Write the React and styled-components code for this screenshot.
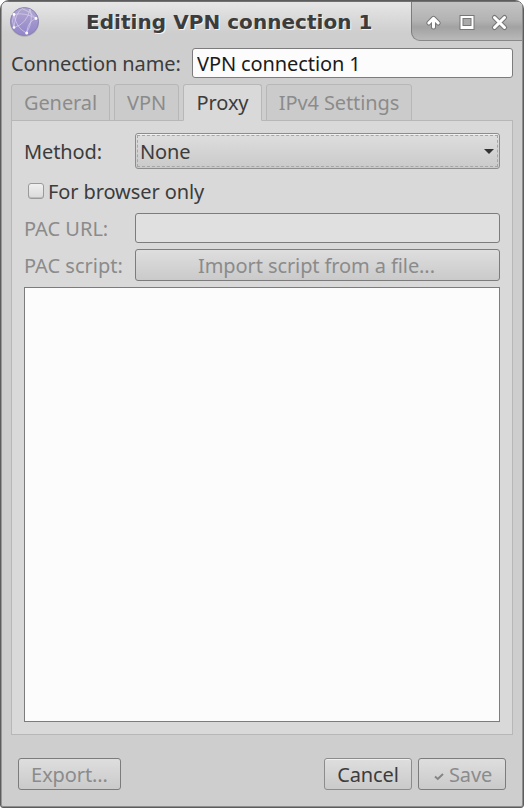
import React from "react";
import styled, { createGlobalStyle, css } from "styled-components";

const GlobalStyle = createGlobalStyle`
  *, *::before, *::after { box-sizing: border-box; }
  body { margin: 0; background: #fff; overflow: hidden; }
`;

const Window = styled.main`
  width: 524px;
  height: 808px;
  display: flex;
  flex-direction: column;
  background: #cecece;
  border: 1px solid #5c5c5c;
  border-radius: 9px 9px 3px 3px;
  box-shadow: inset 1px 0 #979797, inset -1px 0 #8e8e8e, inset 0 -1px #8e8e8e, inset 0 1px #f0f0f0;
  overflow: hidden;
  font-family: "Noto Sans", sans-serif;
  font-size: 20px;
  line-height: 28px;
  letter-spacing: -0.1px;
  color: #3c3c3c;
`;

const TitleBar = styled.header`
  height: 40px;
  flex: none;
  display: flex;
  align-items: flex-start;
  margin: 0 1px;
  border-top: 1px solid #707070;
  background: linear-gradient(#e6e6e6, #cecece 31px);
`;

const AppIcon = styled.svg`
  width: 32px;
  height: 32px;
  margin: 3px 0 0 6px;
  flex: none;
`;

const Title = styled.h1`
  flex: 1;
  margin: 0;
  padding-left: 46px;
  font: bold 20px/40px "DejaVu Sans", sans-serif;
  letter-spacing: 0.05px;
  white-space: nowrap;
  text-shadow: 1px 1px #f4f4f4;
`;

const WindowControls = styled.div`
  width: 111px;
  height: 39px;
  display: flex;
  align-items: center;
  justify-content: space-between;
  padding: 2px 12px 0 11px;
  background: linear-gradient(#c3c3c3, #b3b3b3 48%, #a2a2a2 66%, #b9b9b9);
  border-left: 1px solid #7c7c7c;
  border-bottom: 1px solid #888;
  border-bottom-left-radius: 9px;
  flex: none;
`;

const ControlIcon = styled.svg`
  width: 20px;
  height: 20px;
`;

const NameRow = styled.label`
  display: flex;
  margin: 7px 10px 0;
  line-height: 32px;
  height: 30px;
`;

const NameLabel = styled.span`
  width: 181px;
  flex: none;
`;

const Entry = styled.input`
  flex: 1;
  min-width: 0;
  height: 30px;
  padding: 0 4px;
  border: 1px solid #7c7c7c;
  border-radius: 3px;
  outline: none;
  background: #fcfcfc;
  font: inherit;
  line-height: 28px;
  letter-spacing: inherit;
  color: #1a1a1a;
  &:disabled { background: #e0e0e0; }
`;

const Tabs = styled.nav`
  display: flex;
  gap: 4px;
  height: 37px;
  margin: 6px 10px -1px;
  flex: none;
  z-index: 1;
`;

const Tab = styled.button`
  width: ${(p) => p.$width}px;
  height: 37px;
  padding: 0;
  border: 1px solid #b7b7b7;
  border-radius: 3px 3px 0 0;
  background: #cbcbcb;
  font: inherit;
  letter-spacing: inherit;
  color: #8b8b8b;
  white-space: nowrap;
  ${(p) => p.$active && css`
    background: #d9d9d9;
    border-bottom-color: #d9d9d9;
    color: #3c3c3c;
  `}
`;

const Panel = styled.section`
  height: 615px;
  flex: none;
  margin: 0 10px;
  padding: 12px;
  display: flex;
  flex-direction: column;
  background: #d9d9d9;
  border: 1px solid #b7b7b7;
`;

const Field = styled.div`
  display: flex;
  align-items: center;
  margin-bottom: 6px;
  color: ${(p) => (p.$disabled ? "#8b8b8b" : "#3c3c3c")};
`;

const FieldLabel = styled.span`
  width: 111px;
  flex: none;
  padding-top: 2px;
  white-space: nowrap;
  letter-spacing: ${(p) => (p.$loose ? "0" : "inherit")};
`;

const Button = styled.button`
  height: 32px;
  width: ${(p) => (p.$width ? `${p.$width}px` : "auto")};
  flex: ${(p) => (p.$width ? "none" : 1)};
  padding: 2px 0 0;
  display: flex;
  align-items: center;
  justify-content: center;
  border: 1px solid #8c8c8c;
  border-radius: 3px;
  background: linear-gradient(#dedede, #cacaca);
  box-shadow: inset 0 1px #f0f0f0;
  font: inherit;
  letter-spacing: inherit;
  color: #3c3c3c;
  white-space: nowrap;
  &:disabled { color: #8b8b8b; border-color: #7c7c7c; box-shadow: none; }
`;

const ImportButton = styled(Button)`
  padding-right: 2px;
`;

const Combo = styled(Button)`
  height: 36px;
  padding: 1px;
`;

const FocusFrame = styled.span`
  flex: 1;
  height: 32px;
  display: flex;
  align-items: center;
  justify-content: space-between;
  padding: 2px 3px 0 2px;
  border: 1px dashed #a6a6a6;
`;

const Arrow = styled.svg`
  width: 10px;
  height: 6px;
`;

const CheckRow = styled.label`
  height: 32px;
  display: flex;
  align-items: center;
  gap: 4px;
  margin: 0 0 6px 4px;
`;

const CheckBox = styled.span`
  width: 16px;
  height: 16px;
  border: 1px solid #9a9a9a;
  border-radius: 3px;
  background: linear-gradient(#f0f0f0, #dadada);
  box-shadow: inset 0 -1px #bcbcbc;
`;

const CheckText = styled.span`
  padding-top: 2px;
`;

const ScriptArea = styled.textarea`
  width: 476px;
  height: 435px;
  flex: none;
  padding: 4px;
  border: 1px solid #7c7c7c;
  border-radius: 0;
  resize: none;
  outline: none;
  background: #fcfcfc;
`;

const Actions = styled.footer`
  display: flex;
  justify-content: space-between;
  margin: 23px 17px 0;
`;

const ActionGroup = styled.div`
  display: flex;
  gap: 6px;
`;

const CheckMark = styled.svg`
  width: 10px;
  height: 9px;
  margin: 3px 5px 0 2px;
`;

const TABS = [
  { name: "General", width: 99 },
  { name: "VPN", width: 65 },
  { name: "Proxy", width: 79, active: true },
  { name: "IPv4 Settings", width: 146 },
];

function NetworkIcon() {
  return (
    <AppIcon viewBox="0 0 32 32">
      <defs>
        <linearGradient id="globe" x1="0" y1="0" x2="0" y2="1">
          <stop offset="0" stopColor="#b1a8cf" />
          <stop offset="1" stopColor="#9385cb" />
        </linearGradient>
      </defs>
      <ellipse cx="16.5" cy="17.5" rx="14.5" ry="14.2" fill="#777" opacity=".35" />
      <circle cx="16.5" cy="16.5" r="14" fill="url(#globe)" stroke="#8c82b3" />
      <g fill="none" stroke="#e5dff6" strokeWidth="1" opacity=".55">
        <path d="M6 9.5Q17 7 28 13.5Q20 16 18.5 28Q8 23 6 9.5M6 22.5Q19 19 22 4Q26 15 18.5 28M6 9.5Q3 16 6 22.5Q7 9 14 3.5Q22 6 28 13.5" />
      </g>
      <g fill="#fff">
        <circle cx="6" cy="9.5" r="1.4" />
        <circle cx="28" cy="13.5" r="1.4" />
        <circle cx="6" cy="22.5" r="1.3" />
        <circle cx="18.7" cy="28" r="1.5" />
      </g>
    </AppIcon>
  );
}

export default function App() {
  return (
    <>
      <GlobalStyle />
      <Window>
        <TitleBar>
          <NetworkIcon />
          <Title>Editing VPN connection 1</Title>
          <WindowControls>
            <ControlIcon viewBox="0 0 20 20" fill="none" strokeLinejoin="round" strokeLinecap="round">
              <path d="M10.5 15V7M5.8 11L10.5 6.3L15.2 11" stroke="#777" strokeWidth="5" />
              <path d="M10.5 15V7M5.8 11L10.5 6.3L15.2 11" stroke="#fff" strokeWidth="3" />
            </ControlIcon>
            <ControlIcon viewBox="0 0 20 20">
              <rect x="2.5" y="3" width="15" height="15" fill="#777" />
              <rect x="3.5" y="4" width="13" height="13" fill="#fff" />
              <rect x="5.5" y="6" width="9" height="8" fill="#777" />
              <rect x="6.5" y="7" width="7" height="6" fill="#aaa" />
            </ControlIcon>
            <ControlIcon viewBox="0 0 20 20" fill="none" strokeLinecap="round">
              <path d="M4.5 5.5L14.5 15.5M14.5 5.5L4.5 15.5" stroke="#777" strokeWidth="5.2" />
              <path d="M4.5 5.5L14.5 15.5M14.5 5.5L4.5 15.5" stroke="#fff" strokeWidth="3" />
            </ControlIcon>
          </WindowControls>
        </TitleBar>

        <NameRow>
          <NameLabel>Connection name:</NameLabel>
          <Entry defaultValue="VPN connection 1" />
        </NameRow>

        <Tabs>
          {TABS.map((tab) => (
            <Tab key={tab.name} $width={tab.width} $active={tab.active}>{tab.name}</Tab>
          ))}
        </Tabs>

        <Panel>
          <Field>
            <FieldLabel>Method:</FieldLabel>
            <Combo>
              <FocusFrame>
                None
                <Arrow viewBox="0 0 10 6"><path d="M0 0H10L5 5Z" fill="#333" /></Arrow>
              </FocusFrame>
            </Combo>
          </Field>
          <CheckRow>
            <CheckBox role="checkbox" aria-checked="false" />
            <CheckText>For browser only</CheckText>
          </CheckRow>
          <Field $disabled>
            <FieldLabel $loose>PAC URL:</FieldLabel>
            <Entry disabled aria-label="PAC URL" />
          </Field>
          <Field $disabled>
            <FieldLabel $loose>PAC script:</FieldLabel>
            <ImportButton disabled>Import script from a file...</ImportButton>
          </Field>
          <ScriptArea aria-label="PAC script" />
        </Panel>

        <Actions>
          <Button disabled $width={103}>Export...</Button>
          <ActionGroup>
            <Button $width={88}>Cancel</Button>
            <Button disabled $width={88}>
              <CheckMark viewBox="0 0 10 9" fill="none">
                <path d="M1 4.5L3.8 7L9 2" stroke="#858585" strokeWidth="2" />
              </CheckMark>
              Save
            </Button>
          </ActionGroup>
        </Actions>
      </Window>
    </>
  );
}
